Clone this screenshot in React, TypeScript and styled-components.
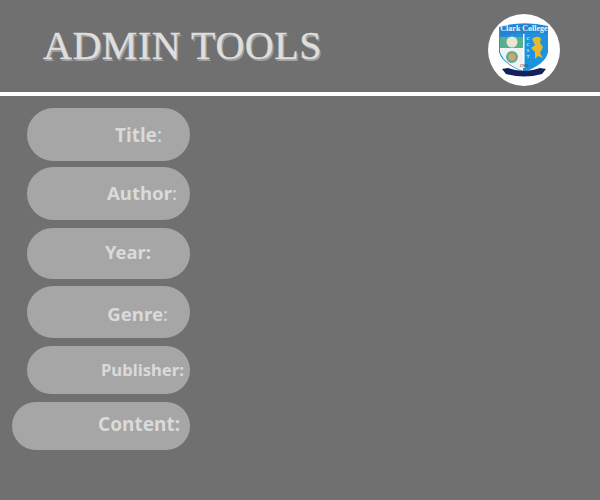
import React from "react";
import styled, { createGlobalStyle } from "styled-components";

const Global = createGlobalStyle`
  html, body { margin: 0; padding: 0; background: #707070; }
`;

const Page = styled.div`
  width: 600px;
  height: 500px;
  background: #707070;
  overflow: hidden;
`;

const Header = styled.header`
  height: 92px;
  display: flex;
  align-items: flex-start;
  justify-content: space-between;
  padding: 14px 40px 0 43px;
  box-sizing: border-box;
`;

const Title = styled.h1`
  margin: 9px 0 0;
  font-family: "Liberation Serif", serif;
  font-weight: 400;
  font-size: 40px;
  line-height: 46px;
  letter-spacing: 0.55px;
  color: #dedede;
  -webkit-text-stroke: 0.35px #dedede;
  text-shadow: 1.5px 1.5px 0 #a0a0a0;
  white-space: nowrap;
`;

const LogoDisc = styled.div`
  width: 72px;
  height: 72px;
  border-radius: 50%;
  background: #fff;
  display: flex;
`;

const Rule = styled.div`
  height: 4px;
  background: #fff;
`;

const Fields = styled.div`
  width: 190px;
  padding-top: 12px;
  display: flex;
  flex-direction: column;
  align-items: flex-end;
`;

const Pill = styled.div<{ $w: number; $h: number; $gap: number; $pr: number; $pt: number; $pb: number; $size: number }>`
  width: ${(p) => p.$w}px;
  height: ${(p) => p.$h}px;
  margin-bottom: ${(p) => p.$gap}px;
  padding: ${(p) => p.$pt}px ${(p) => p.$pr}px ${(p) => p.$pb}px 0;
  box-sizing: border-box;
  border-radius: 27px;
  background: #a6a6a6;
  display: flex;
  align-items: center;
  justify-content: flex-end;
  font-family: "Noto Sans", sans-serif;
  font-weight: 700;
  font-size: ${(p) => p.$size}px;
  color: #dadada;
`;

const Colon = styled.span<{ $light?: boolean }>`
  font-weight: ${(p) => (p.$light ? 400 : 700)};
`;

function Crest() {
  return (
    <svg width="72" height="72" viewBox="0 0 72 72" aria-hidden="true">
      <path d="M11 13 Q35 6 60 12 L60 38 Q58 50 36 58 Q14 50 11 38 Z" fill="#1c93dc" />
      <path d="M12 23 H35 V57 Q16 50 12 38 Z" fill="#eef3f0" />
      <rect x="12" y="23" width="23" height="11" fill="#55b08e" />
      <rect x="35" y="20" width="1.5" height="34" fill="#fff" />
      <path d="M12 13.5 Q35 7 59 12.5 L59 20 Q35 16 12 23 Z" fill="#2a80cc" />
      <text x="36" y="16.5" textAnchor="middle" fontFamily="Liberation Serif, serif" fontWeight="700" fontSize="8" fill="#e8f4ff">Clark College</text>
      <circle cx="24" cy="28" r="5.5" fill="#e7e6d6" />
      <circle cx="24" cy="43" r="6" fill="#65ad92" />
      <circle cx="24" cy="43" r="3.4" fill="#d3a66c" />
      <text x="38.5" y="26" fontFamily="Liberation Serif, serif" fontSize="5" fill="#fff">C</text>
      <text x="38.5" y="32" fontFamily="Liberation Serif, serif" fontSize="5" fill="#fff">C</text>
      <text x="38.5" y="38" fontFamily="Liberation Serif, serif" fontSize="5" fill="#fff">S</text>
      <text x="38.5" y="44" fontFamily="Liberation Serif, serif" fontSize="5" fill="#fff">T</text>
      <path d="M44 25 Q48 21 53 24 L52 29 L55 33 L52 39 L55 44 L50 42 L47 45 L47 38 L43 34 L47 31 Z" fill="#e6b92e" />
      <text x="36" y="53" textAnchor="middle" fontFamily="Liberation Serif, serif" fontSize="4.5" fill="#333">1905</text>
      <path d="M14 55 L20 54 Q36 60 52 54 L58 55 L54 60 Q36 65 18 60 Z" fill="#17205e" />
    </svg>
  );
}

const rows = [
  { t: "Title", h: 53, w: 163, gap: 6, pr: 28, pt: 0, pb: 0, size: 19, light: true },
  { t: "Author", h: 53, w: 163, gap: 8, pr: 13, pt: 0, pb: 2, size: 18.6, light: true },
  { t: "Year", h: 51, w: 163, gap: 7, pr: 39, pt: 0, pb: 4, size: 18.4 },
  { t: "Genre", h: 52, w: 163, gap: 8, pr: 22, pt: 2, pb: 0, size: 18.6, light: true },
  { t: "Publisher", h: 48, w: 163, gap: 8, pr: 6, pt: 0, pb: 2, size: 16.7 },
  { t: "Content", h: 48, w: 178, gap: 0, pr: 10, pt: 0, pb: 4, size: 19 },
];

export default function App() {
  return (
    <Page>
      <Global />
      <Header>
        <Title>ADMIN TOOLS</Title>
        <LogoDisc>
          <Crest />
        </LogoDisc>
      </Header>
      <Rule />
      <Fields>
        {rows.map((r) => (
          <Pill key={r.t} $w={r.w} $h={r.h} $gap={r.gap} $pr={r.pr} $pt={r.pt} $pb={r.pb} $size={r.size}>
            {r.t}
            <Colon $light={r.light}>:</Colon>
          </Pill>
        ))}
      </Fields>
    </Page>
  );
}
